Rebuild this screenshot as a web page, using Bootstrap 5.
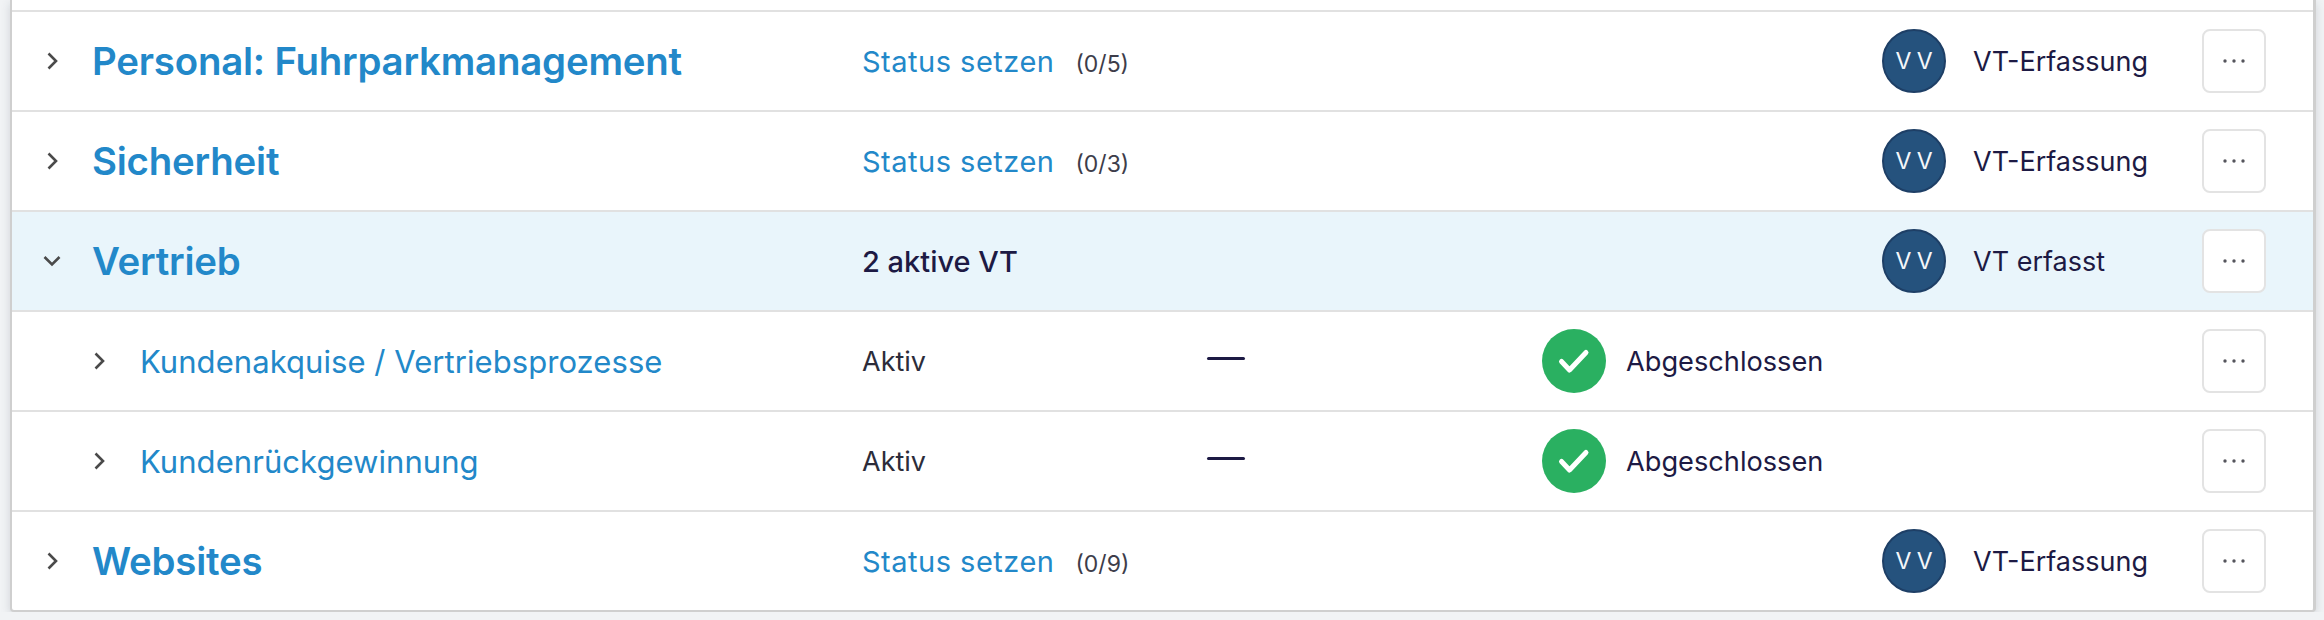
<!DOCTYPE html>
<html lang="en">
<head>
  <meta charset="UTF-8" />
  <meta name="viewport" content="width=device-width, initial-scale=1" />
  <title>VT-Erfassung</title>
  <link href="https://cdn.jsdelivr.net/npm/bootstrap@5.3.3/dist/css/bootstrap.min.css" rel="stylesheet">
  <style>
    body {
      background-color: #f1f3f5;
      font-family: Inter, "Liberation Sans", sans-serif;
      color: #1d1a44;
      overflow: hidden;
    }
    .sheet {
      margin: 0 8px 0 10px;
      background: #fff;
      border-left: 2px solid #cfcfcf;
      border-right: 3px solid #cfcfcf;
      border-bottom: 2px solid #cfcfcf;
      border-bottom-left-radius: 4px;
      border-bottom-right-radius: 4px;
      box-shadow: 0 3px 10px rgba(60, 70, 90, .18);
    }
    .top-sliver { height: 12px; border-bottom: 2px solid #e1e1e1; }
    .vt-row { height: 100px; border-bottom: 2px solid #e1e1e1; }
    .vt-row:last-child { height: 98px; border-bottom: 0; }
    .vt-row.open { background: #e9f5fb; }
    .chev-cell { width: 80px; padding-left: 34px; flex: none; }
    .open .chev-cell { padding-left: 31px; }
    .title-cell { width: 770px; flex: none; padding-top: 2px; }
    .status-cell { width: 1020px; flex: none; padding-top: 2px; }
    .sub .chev-cell { width: 128px; padding-left: 81px; }
    .sub .title-cell { width: 722px; }
    .sub .status-cell { width: 345px; }
    .vt-title { color: #2288c9; font-size: 38.4px; font-weight: 600; letter-spacing: -.2px; text-decoration: none; }
    .vt-sub { color: #2288c9; font-size: 31px; font-weight: 400; letter-spacing: .06px; text-decoration: none; }
    .set-link { color: #2288c9; font-size: 29px; letter-spacing: .5px; text-decoration: none; }
    .count { font-size: 23px; color: #3d3d4a; margin-left: 21px; }
    .active-count { font-size: 29px; font-weight: 500; }
    .plain { font-size: 27px; color: #2c2c3a; }
    .dash-cell { width: 335px; flex: none; padding-bottom: 6px; }
    .dash { display: block; width: 38px; height: 3px; background: #1d1a44; border-radius: 2px; }
    .check { width: 64px; height: 64px; flex: none; }
    .done-cell { width: 660px; flex: none; font-size: 27.2px; gap: 20px; }
    .done-cell span { padding-top: 2px; }
    .avatar {
      width: 64px; height: 64px; flex: none;
      background: #25527d; border: 2px solid #1e3f66;
      color: #f4f7fa; font-size: 23px; letter-spacing: 5px; padding-left: 5px;
    }
    .owner-cell { width: 320px; flex: none; gap: 27px; font-size: 27px; }
    .owner-cell span { padding-top: 2px; }
    .dots-btn {
      width: 64px; height: 64px; padding: 0;
      background: #fff; border: 2px solid #e3e3e3; border-radius: 8px;
    }
  </style>
</head>
<body>
  <div class="sheet">
    <div class="top-sliver"></div>
    <div id="rows"></div>
  </div>

  <script>
    const chevRight = '<svg width="14" height="18" viewBox="0 0 14 18" fill="none" stroke="#4a4a4a" stroke-width="2.6"><path d="M2.5 1.5 10 9l-7.5 7.5"/></svg>';
    const chevDown = '<svg width="18" height="14" viewBox="0 0 18 14" fill="none" stroke="#4a4a4a" stroke-width="2.6"><path d="M1.5 3 9 10.5 16.500 3"/></svg>';
    const dots = '<svg width="24" height="6" viewBox="0 0 24 6" fill="#55555c"><circle cx="3" cy="3" r="1.700"/><circle cx="12" cy="3" r="1.700"/><circle cx="21" cy="3" r="1.700"/></svg>';
    const check = '<svg class="check" viewBox="0 0 64 64"><circle cx="32" cy="32" r="32" fill="#2ab061"/><path d="M19.500 32.500l8 8.500 16.500-17.500" fill="none" stroke="#fff" stroke-width="5" stroke-linecap="round" stroke-linejoin="round"/></svg>';

    function owner(label) {
      return `<div class="owner-cell d-flex align-items-center">
        <div class="avatar rounded-circle d-flex align-items-center justify-content-center">VV</div><span>${label}</span></div>`;
    }
    function more() {
      return `<button class="dots-btn d-flex align-items-center justify-content-center" type="button">${dots}</button>`;
    }
    function mainRow(title, count) {
      return `<div class="vt-row d-flex align-items-center">
        <div class="chev-cell d-flex">${chevRight}</div>
        <div class="title-cell"><a href="#" class="vt-title">${title}</a></div>
        <div class="status-cell"><a href="#" class="set-link">Status setzen</a><span class="count">(${count})</span></div>
        ${owner('VT-Erfassung')}${more()}</div>`;
    }
    function subRow(title) {
      return `<div class="vt-row sub d-flex align-items-center">
        <div class="chev-cell d-flex">${chevRight}</div>
        <div class="title-cell"><a href="#" class="vt-sub">${title}</a></div>
        <div class="status-cell plain">Aktiv</div>
        <div class="dash-cell"><span class="dash"></span></div>
        <div class="done-cell d-flex align-items-center">${check}<span>Abgeschlossen</span></div>
        ${more()}</div>`;
    }

    document.getElementById('rows').innerHTML = [
      mainRow('Personal: Fuhrparkmanagement', '0/5'),
      mainRow('Sicherheit', '0/3'),
      `<div class="vt-row open d-flex align-items-center">
        <div class="chev-cell d-flex">${chevDown}</div>
        <div class="title-cell"><a href="#" class="vt-title">Vertrieb</a></div>
        <div class="status-cell active-count">2 aktive VT</div>
        ${owner('VT erfasst')}${more()}</div>`,
      subRow('Kundenakquise / Vertriebsprozesse'),
      subRow('Kundenrückgewinnung'),
      mainRow('Websites', '0/9')
    ].join('');
  </script>
  <script src="https://cdn.jsdelivr.net/npm/bootstrap@5.3.3/dist/js/bootstrap.bundle.min.js"></script>
</body>
</html>
